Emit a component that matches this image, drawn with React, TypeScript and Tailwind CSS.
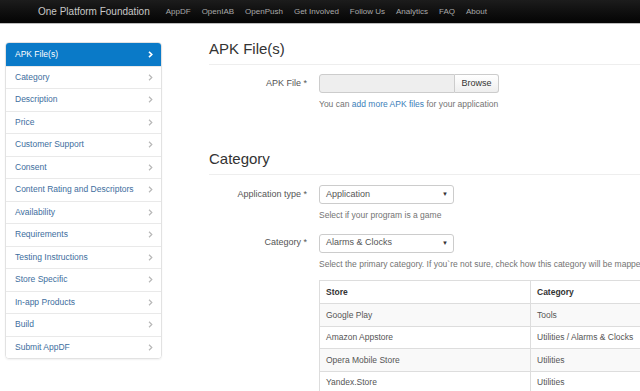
import React from "react";

const navLinks = ["AppDF", "OpenIAB", "OpenPush", "Get Involved", "Follow Us", "Analytics", "FAQ", "About"];

const sections = [
  "APK File(s)",
  "Category",
  "Description",
  "Price",
  "Customer Support",
  "Consent",
  "Content Rating and Descriptors",
  "Availability",
  "Requirements",
  "Testing Instructions",
  "Store Specific",
  "In-app Products",
  "Build",
  "Submit AppDF",
];

const stores = [
  ["Google Play", "Tools"],
  ["Amazon Appstore", "Utilities / Alarms & Clocks"],
  ["Opera Mobile Store", "Utilities"],
  ["Yandex.Store", "Utilities"],
];

function Chevron({ active }: { active?: boolean }) {
  return (
    <svg width="5" height="7" viewBox="0 0 5 7" className="shrink-0">
      <path
        d="M1 0.8 L3.8 3.5 L1 6.2"
        fill="none"
        stroke={active ? "#ffffff" : "#b8b8b8"}
        strokeWidth={active ? 1.6 : 1.2}
      />
    </svg>
  );
}

function Select({ value }: { value: string }) {
  return (
    <div className="flex h-[19px] w-[135px] items-center justify-between rounded-[3px] border border-[#cccccc] bg-white pl-[6px] pr-[5px] text-[9px] text-[#555555]">
      <span>{value}</span>
      <span className="text-[6px] text-[#333333]">▼</span>
    </div>
  );
}

function Label({ children }: { children: React.ReactNode }) {
  return <div className="w-[103px] pr-[5px] text-right text-[9px] text-[#555555]">{children}</div>;
}

export default function App() {
  return (
    <div className="h-[391px] w-[640px] overflow-hidden bg-white font-['Liberation_Sans',Arial,sans-serif]">
      {/* top bar */}
      <div className="flex h-[24px] items-center border-b border-[#bdbdbd] bg-gradient-to-b from-[#1c1c1c] to-[#050505] pl-[38px]">
        <span className="text-[10px] text-[#c8c8c8]">One Platform Foundation</span>
        <div className="ml-[16px] flex gap-[11px] text-[8px] text-[#a9a9a9]">
          {navLinks.map((l) => (
            <span key={l}>{l}</span>
          ))}
        </div>
      </div>

      <div className="flex pt-[18px]">
        {/* sidebar */}
        <div className="ml-[5px] w-[157px] shrink-0">
          <div className="overflow-hidden rounded-[4px] border border-[#e2e2e2] shadow-[0_1px_2px_rgba(0,0,0,0.06)]">
            {sections.map((s, i) => (
              <div
                key={s}
                className={
                  i === 0
                    ? "flex h-[22.5px] items-center justify-between bg-[#0a7ac8] pl-[9px] pr-[8px] text-[8.5px] text-white"
                    : "flex h-[22.5px] items-center justify-between border-t border-[#e9e9e9] bg-white pl-[9px] pr-[8px] text-[8.5px] text-[#3d6e9e]"
                }
              >
                <span>{s}</span>
                <Chevron active={i === 0} />
              </div>
            ))}
          </div>
        </div>

        {/* main */}
        <div className="ml-[47px] flex-1">
          <h3 className="-mt-[2px] border-b border-[#eeeeee] pb-[6px] text-[15px] leading-[18px] text-[#333333]">APK File(s)</h3>
          <div className="mt-[9px] flex items-center">
            <Label>APK File *</Label>
            <div className="ml-[7px] flex h-[19px]">
              <div className="w-[136px] rounded-l-[3px] border border-[#cccccc] bg-[#eeeeee]" />
              <div className="flex w-[44px] items-center justify-center rounded-r-[3px] border border-l-0 border-[#cccccc] bg-gradient-to-b from-white to-[#eeeeee] text-[9px] text-[#333333]">
                Browse
              </div>
            </div>
          </div>
          <div className="ml-[110px] mt-[5px] text-[8.5px] text-[#737373]">
            You can <span className="text-[#3b80b9]">add more APK files</span> for your application
          </div>

          <h3 className="mt-[39px] border-b border-[#eeeeee] pb-[6px] text-[15px] leading-[18px] text-[#333333]">Category</h3>
          <div className="mt-[10px] flex items-center">
            <Label>Application type *</Label>
            <div className="ml-[7px]">
              <Select value="Application" />
            </div>
          </div>
          <div className="ml-[110px] mt-[5px] text-[8.5px] text-[#737373]">Select if your program is a game</div>
          <div className="mt-[12px] flex items-center">
            <Label>Category *</Label>
            <div className="ml-[7px]">
              <Select value="Alarms & Clocks" />
            </div>
          </div>
          <div className="ml-[110px] mt-[5px] whitespace-nowrap text-[8.5px] text-[#737373]">
            Select the primary category. If you`re not sure, check how this category will be mapped to other stores
          </div>

          <table className="ml-[110px] mt-[10px] w-[420px] border-collapse text-[8.5px] text-[#555555]">
            <thead>
              <tr className="h-[23px]">
                <th className="w-[211px] border border-[#dddddd] pl-[6px] text-left font-bold text-[#333333]">Store</th>
                <th className="border border-[#dddddd] pl-[6px] text-left font-bold text-[#333333]">Category</th>
              </tr>
            </thead>
            <tbody>
              {stores.map(([s, c], i) => (
                <tr key={s} className={i % 2 === 0 ? "h-[22.5px] bg-[#f9f9f9]" : "h-[22.5px] bg-white"}>
                  <td className="border border-[#dddddd] pl-[6px]">{s}</td>
                  <td className="border border-[#dddddd] pl-[6px]">{c}</td>
                </tr>
              ))}
            </tbody>
          </table>
        </div>
      </div>
    </div>
  );
}
